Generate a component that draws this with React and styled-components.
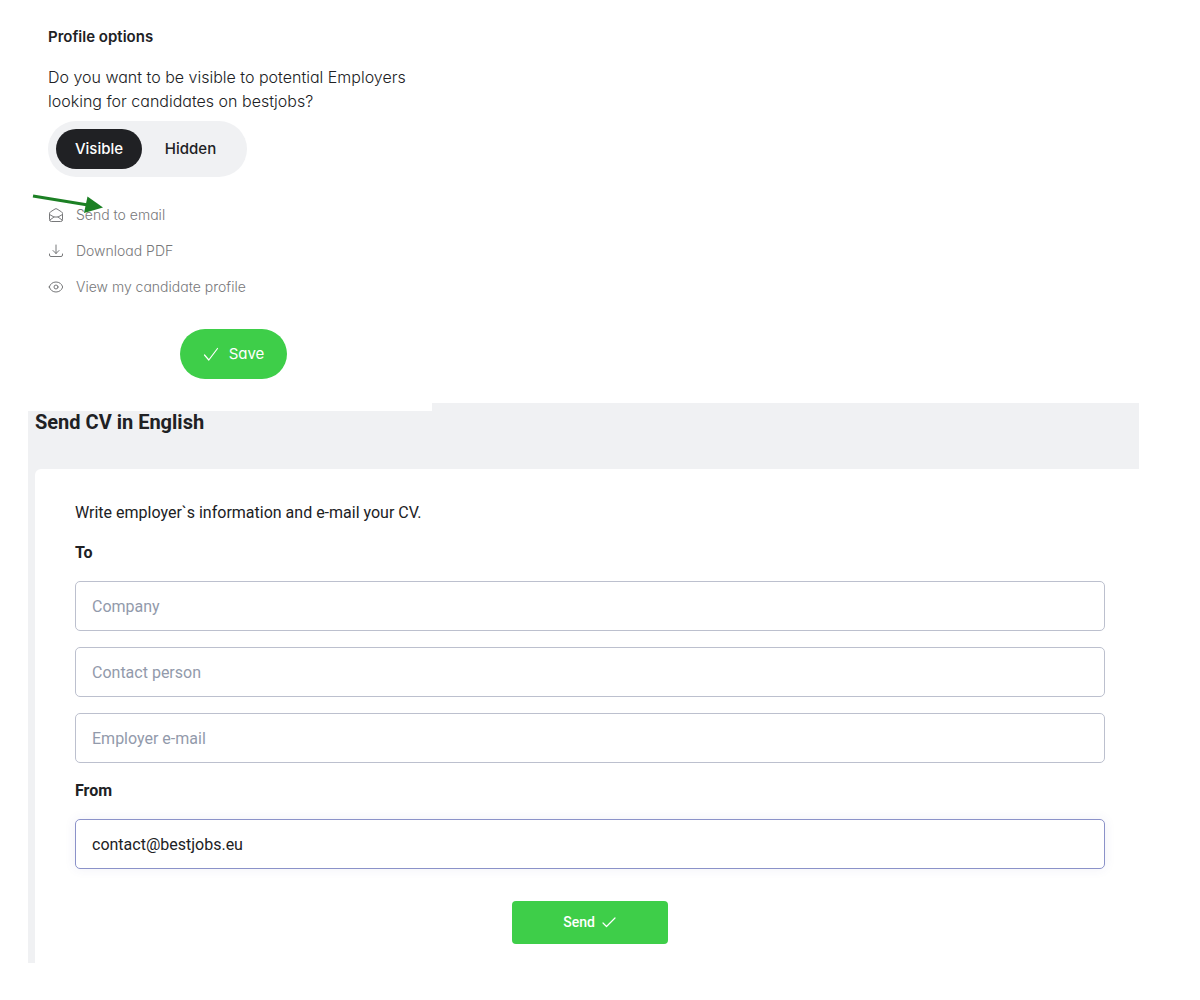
import React, { useState } from "react";
import styled, { createGlobalStyle } from "styled-components";

const GlobalStyle = createGlobalStyle`
  *, *::before, *::after { box-sizing: border-box; }
  body {
    margin: 0;
    background: #fff;
    color: #202124;
    font-family: Roboto, "Liberation Sans", sans-serif;
    font-size: 16px;
    line-height: 24px;
  }
  h1, h2, p, ul, fieldset { margin: 0; padding: 0; border: 0; }
  button, input { font: inherit; }
`;

const Page = styled.main`
  padding: 0 61px 37px 28px;
`;

const ProfilePanel = styled.section`
  position: relative;
  z-index: 1;
  display: flex;
  flex-direction: column;
  align-items: flex-start;
  width: 404px;
  max-width: 100%;
  padding: 25px 13px 32px 20px;
  background: #fff;
  font-family: Inter, "Open Sans", sans-serif;
  font-feature-settings: "cv11";
`;

const ProfileTitle = styled.h2`
  margin-bottom: 16px;
  font-size: 15px;
  font-weight: 600;
  line-height: 24px;
`;

const Question = styled.p`
  margin-bottom: 8px;
  font-size: 16px;
  font-weight: 300;
  line-height: 24px;
`;

const Toggle = styled.div`
  display: flex;
  padding: 8px;
  border-radius: 28px;
  background: #f0f1f3;
`;

const ToggleOption = styled.button`
  height: 40px;
  min-width: ${(p) => (p.$wide ? 97 : 86)}px;
  padding: 0;
  border: 0;
  border-radius: 20px;
  background: ${(p) => (p.$active ? "#202124" : "transparent")};
  color: ${(p) => (p.$active ? "#fff" : "#202124")};
  font-size: 15px;
  font-weight: 500;
  cursor: pointer;
`;

const LinkList = styled.ul`
  position: relative;
  width: 100%;
  margin: 20px 0 24px;
  list-style: none;
`;

const ActionLink = styled.a`
  display: inline-flex;
  align-items: center;
  gap: 12px;
  height: 36px;
  color: #77787a;
  font-size: 14px;
  font-weight: 300;
  text-decoration: none;
`;

const LineIcon = styled.svg`
  width: 16px;
  height: 16px;
  flex: none;
  fill: none;
  stroke: currentColor;
  stroke-width: 1;
  stroke-linecap: round;
  stroke-linejoin: round;
`;

const Pointer = styled.svg`
  position: absolute;
  top: -5px;
  left: -18px;
  width: 76px;
  height: 24px;
  pointer-events: none;
`;

const SaveButton = styled.button`
  display: flex;
  align-items: center;
  align-self: center;
  justify-content: center;
  gap: 10px;
  width: 107px;
  height: 50px;
  border: 0;
  border-radius: 25px;
  background: #3ece49;
  color: #fff;
  font-size: 15px;
  cursor: pointer;
`;

const SendPanel = styled.section`
  margin-top: -8px;
  padding: 7px 0 0 7px;
  background: #f0f1f3;
`;

const SendTitle = styled.h1`
  margin-bottom: 35px;
  font-size: 20px;
  font-weight: 700;
  line-height: 24px;
`;

const Form = styled.form`
  display: flex;
  flex-direction: column;
  padding: 32px 34px 19px 40px;
  border-top-left-radius: 6px;
  background: #fff;
`;

const Group = styled.fieldset`
  display: flex;
  flex-direction: column;
  gap: 16px;
  min-width: 0;
  margin-top: 16px;
`;

const GroupTitle = styled.h2`
  font-size: 16px;
  font-weight: 700;
  line-height: 24px;
`;

const Field = styled.input`
  width: 100%;
  height: 50px;
  padding: 0 16px;
  border: 1px solid ${(p) => (p.$highlight ? "#8b92c9" : "#bcc0ce")};
  border-radius: 5px;
  outline: 0;
  background: #fff;
  box-shadow: ${(p) => (p.$highlight ? "0 0 12px rgba(60, 70, 150, 0.08)" : "none")};
  color: #202124;
  &::placeholder { color: #929aab; opacity: 1; }
`;

const SendButton = styled.button`
  display: flex;
  align-items: center;
  align-self: center;
  justify-content: center;
  gap: 6px;
  width: 156px;
  height: 43px;
  margin-top: 32px;
  padding: 0 0 2px;
  border: 0;
  border-radius: 4px;
  background: #3ece49;
  color: #fff;
  font-size: 14px;
  font-weight: 500;
  cursor: pointer;
`;

const EnvelopeIcon = () => (
  <LineIcon viewBox="0 0 16 16" aria-hidden="true">
    <path d="M1.500 6.500q0-1 .8-1.500L7 2q1-.6 2 0l4.700 3q.8.5.8 1.500v6.200q0 1.800-1.800 1.800H3.300q-1.800 0-1.800-1.800Z" />
    <path d="m1.500 7.500 4.500 2.500h4l4.500-2.500M2 13 6 10m4 0 4 3" />
  </LineIcon>
);

const DownloadIcon = () => (
  <LineIcon viewBox="0 0 16 16" aria-hidden="true">
    <path d="M8 2v8.500M5 7.500l3 3 3-3M1.500 11v1q0 1.500 1.500 1.500h10q1.500 0 1.500-1.500v-1" />
  </LineIcon>
);

const EyeIcon = () => (
  <LineIcon viewBox="0 0 16 16" aria-hidden="true">
    <path d="M1.300 8C2.300 4.700 4.900 3 8 3s5.700 1.700 6.700 5c-1 3.300-3.600 5-6.700 5S2.300 11.300 1.300 8Z" />
    <circle cx="8" cy="8" r="2" />
  </LineIcon>
);

const CheckIcon = () => (
  <LineIcon viewBox="0 0 16 16" aria-hidden="true">
    <path d="m1.500 9 4.300 5L14.500 2.500" strokeWidth="1.200" />
  </LineIcon>
);

const SmallCheckIcon = () => (
  <LineIcon viewBox="0 0 16 16" aria-hidden="true">
    <path d="m2 9 3.500 3.500L14 4" strokeWidth="1.200" />
  </LineIcon>
);

const links = [
  { label: "Send to email", Icon: EnvelopeIcon },
  { label: "Download PDF", Icon: DownloadIcon },
  { label: "View my candidate profile", Icon: EyeIcon },
];

export default function App() {
  const [visible, setVisible] = useState(true);
  return (
    <>
      <GlobalStyle />
      <Page>
        <ProfilePanel>
          <ProfileTitle>Profile options</ProfileTitle>
          <Question>
            Do you want to be visible to potential Employers
            <br />
            looking for candidates on bestjobs?
          </Question>
          <Toggle role="group" aria-label="Profile visibility">
            <ToggleOption type="button" $active={visible} aria-pressed={visible} onClick={() => setVisible(true)}>
              Visible
            </ToggleOption>
            <ToggleOption type="button" $wide $active={!visible} aria-pressed={!visible} onClick={() => setVisible(false)}>
              Hidden
            </ToggleOption>
          </Toggle>
          <LinkList>
            {links.map(({ label, Icon }) => (
              <li key={label}>
                <ActionLink href="#">
                  <Icon />
                  {label}
                </ActionLink>
              </li>
            ))}
            <Pointer viewBox="0 0 76 24" aria-hidden="true">
              <path d="M3 4 58 13" stroke="#1c8024" strokeWidth="3" />
              <path d="M57.500 4.500 73 15.500 54 21Z" fill="#1c8024" />
            </Pointer>
          </LinkList>
          <SaveButton type="button">
            <CheckIcon />
            Save
          </SaveButton>
        </ProfilePanel>
        <SendPanel>
          <SendTitle>Send CV in English</SendTitle>
          <Form onSubmit={(e) => e.preventDefault()}>
            <p>Write employer`s information and e-mail your CV.</p>
            <Group aria-labelledby="to-title">
              <GroupTitle id="to-title">To</GroupTitle>
              <Field aria-label="Company" placeholder="Company" />
              <Field aria-label="Contact person" placeholder="Contact person" />
              <Field type="email" aria-label="Employer e-mail" placeholder="Employer e-mail" />
            </Group>
            <Group aria-labelledby="from-title">
              <GroupTitle id="from-title">From</GroupTitle>
              <Field type="email" aria-labelledby="from-title" defaultValue="contact@bestjobs.eu" $highlight />
            </Group>
            <SendButton type="submit">
              Send
              <SmallCheckIcon />
            </SendButton>
          </Form>
        </SendPanel>
      </Page>
    </>
  );
}
